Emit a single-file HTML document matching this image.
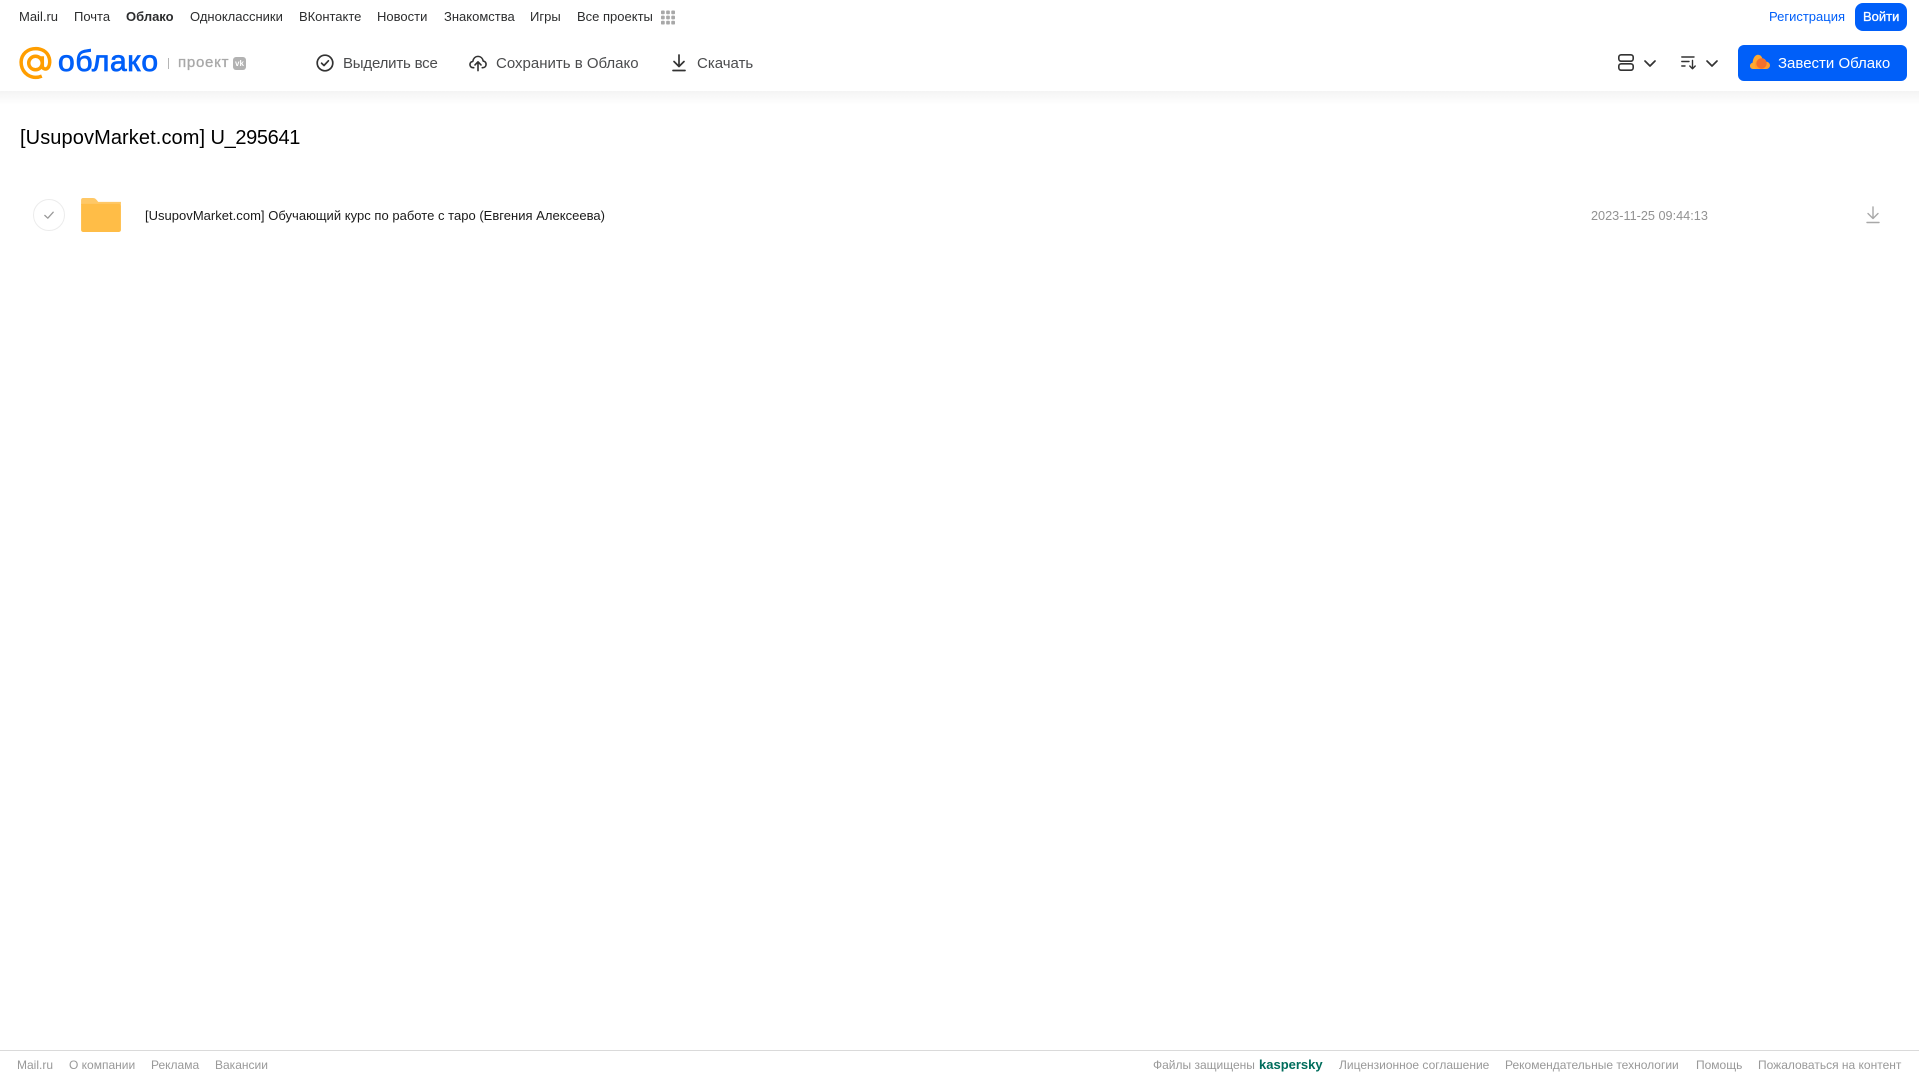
<!DOCTYPE html>
<html lang="ru">
<head>
<meta charset="utf-8">
<title>Облако</title>
<style>
html,body{margin:0;padding:0;background:#fff;}
body{position:relative;width:1919px;height:1079px;overflow:hidden;font-family:"Liberation Sans",Arial,sans-serif;}
.t{position:absolute;white-space:nowrap;line-height:20px;}
.n{font-size:13px;color:#2c2d2e;top:7px;}
.b{font-size:15px;color:#4b4c4e;top:54px;}
.f{font-size:12px;color:#999;top:1055px;}
svg{position:absolute;overflow:visible;}
#shadow{position:absolute;left:0;top:91px;width:1919px;height:14px;background:linear-gradient(#f4f4f4,#fff);}
#rule{position:absolute;left:0;top:1050px;width:1919px;height:1px;background:#dadada;}
</style>
</head>
<body>
<div id="shadow"></div>

<span class="t n" style="left:19px">Mail.ru</span>
<span class="t n" style="left:74px">Почта</span>
<span class="t n" style="left:126px;font-weight:bold">Облако</span>
<span class="t n" style="left:190px">Одноклассники</span>
<span class="t n" style="left:299px;letter-spacing:-.03px">ВКонтакте</span>
<span class="t n" style="left:377px">Новости</span>
<span class="t n" style="left:444px">Знакомства</span>
<span class="t n" style="left:530px">Игры</span>
<span class="t n" style="left:577px">Все проекты</span>
<svg style="left:661px;top:10px" width="14" height="15" viewBox="0 0 15 15" fill="#a8a8a8">
<rect x="0" y="0" width="4" height="4" rx="1"/><rect x="5.5" y="0" width="4" height="4" rx="1"/><rect x="11" y="0" width="4" height="4" rx="1"/>
<rect x="0" y="5.5" width="4" height="4" rx="1"/><rect x="5.5" y="5.5" width="4" height="4" rx="1"/><rect x="11" y="5.5" width="4" height="4" rx="1"/>
<rect x="0" y="11" width="4" height="4" rx="1"/><rect x="5.5" y="11" width="4" height="4" rx="1"/><rect x="11" y="11" width="4" height="4" rx="1"/>
</svg>

<span class="t n" style="left:1769px;color:#005ff9">Регистрация</span>
<div style="position:absolute;left:1855px;top:3px;width:52px;height:28px;border-radius:8px;background:#005ff9"></div>
<span class="t n" style="left:1863px;color:#fff;font-size:13px;-webkit-text-stroke:.3px #fff">Войти</span>

<svg style="left:19px;top:47px" width="33" height="33" viewBox="0 0 34 34" fill="none" stroke="#ff9e00" stroke-width="3.6">
<circle cx="17" cy="16.5" r="7"/>
<path d="M24 9.5V19.5C24 23 28.5 24 30.5 20.5C33 15 31.5 7.5 25.5 3.8C19 0 9.5 1.2 4.8 7.5C0.2 14 1.8 23.5 8.5 28.5C13 31.5 18.5 32 23.5 30"/>
</svg>
<span class="t" style="left:58px;top:44px;font-size:30px;line-height:36px;color:#005ff9;-webkit-text-stroke:.8px #005ff9;letter-spacing:.65px">облако</span>
<div style="position:absolute;left:168px;top:58px;width:1px;height:11px;background:#b5b5b5"></div>
<span class="t" style="left:178px;top:53px;font-size:15px;color:#a8a8a8;-webkit-text-stroke:.3px #a8a8a8;letter-spacing:.75px">проект</span>
<div style="position:absolute;left:233px;top:57px;width:13px;height:13px;border-radius:3px;background:#b2b2b2;color:#fff;font:bold 8px/13px 'Liberation Sans',sans-serif;text-align:center">vk</div>

<svg style="left:316px;top:54px" width="18" height="18" viewBox="0 0 18 18" fill="none" stroke="#333" stroke-width="1.7">
<circle cx="9" cy="9" r="7.8"/><path d="M5.6 9.2L8 11.5L12.4 6.8" stroke-linecap="round" stroke-linejoin="round"/>
</svg>
<span class="t b" style="left:343px;letter-spacing:-.2px">Выделить все</span>

<svg style="left:469px;top:54px" width="18" height="18" viewBox="0 0 19 18" fill="none" stroke="#333" stroke-width="1.7" stroke-linecap="round" stroke-linejoin="round">
<path d="M5 14H4.5C2.3 14 1 12.4 1 10.6C1 8.8 2.4 7.4 4 7.3C4.6 4 6.8 2 9.5 2C12.3 2 14.4 4 15 7C16.8 7.3 18 8.7 18 10.5C18 12.4 16.6 14 14.5 14H14"/>
<path d="M9.5 17V8M6.3 11L9.5 7.8L12.7 11"/>
</svg>
<span class="t b" style="left:496px">Сохранить в Облако</span>

<svg style="left:672px;top:54px" width="14" height="18" viewBox="0 0 14 18" fill="none" stroke="#333" stroke-width="1.7" stroke-linecap="round" stroke-linejoin="round">
<path d="M7 1V12M2 7.5L7 12.5L12 7.5"/><path d="M1 16.5H13"/>
</svg>
<span class="t b" style="left:697px">Скачать</span>

<svg style="left:1618px;top:54px" width="16" height="17" viewBox="0 0 16 17" fill="none" stroke="#333" stroke-width="1.6">
<rect x=".8" y=".8" width="14.4" height="6.4" rx="2.4"/><rect x=".8" y="9.8" width="14.4" height="6.4" rx="2.4"/>
</svg>
<svg style="left:1644px;top:60px" width="12" height="7" viewBox="0 0 12 7" fill="none" stroke="#333" stroke-width="1.7" stroke-linecap="round" stroke-linejoin="round"><path d="M1 1L6 6L11 1"/></svg>
<svg style="left:1681px;top:56px" width="16" height="14" viewBox="0 0 16 14" fill="none" stroke="#333" stroke-width="1.4" stroke-linecap="round" stroke-linejoin="round">
<path d="M.8 1H13M.8 5.5H8M.8 10H4M11.5 4.5V12.5M8.8 10L11.5 12.8L14.2 10"/>
</svg>
<svg style="left:1706px;top:60px" width="12" height="7" viewBox="0 0 12 7" fill="none" stroke="#333" stroke-width="1.7" stroke-linecap="round" stroke-linejoin="round"><path d="M1 1L6 6L11 1"/></svg>

<div style="position:absolute;left:1738px;top:45px;width:169px;height:36px;border-radius:6px;background:#005ff9"></div>
<svg style="left:1750px;top:54px" width="20" height="16" viewBox="0 0 20 16">
<path d="M3 15C1 15 0 13.4 0 12C0 10.2 1.2 9 2.6 8.8C3 4 5.2 .8 8 .8C10.4 .8 11.8 2.6 12.4 4.6L12 15Z" fill="#ffa930"/>
<path d="M7 15C5.2 14 4.4 12 4.8 10C5.4 7 8.4 4.2 11.6 4.2C14.4 4.2 15.8 6 16.2 7.6C18.4 7.8 20 9.4 20 11.4C20 13.4 18.4 15 16.4 15Z" fill="#ff9e2c"/>
<circle cx="11.5" cy="9.5" r="5.2" fill="#f4702c"/>
</svg>
<span class="t" style="left:1778px;top:54px;font-size:15px;color:#fff">Завести Облако</span>

<span class="t" style="left:20px;top:124px;font-size:20px;line-height:28px;color:#000;letter-spacing:.1px">[UsupovMarket.com]</span>
<span class="t" style="left:210.5px;top:124px;font-size:20px;line-height:28px;color:#000;letter-spacing:-.35px">U_295641</span>

<svg style="left:33px;top:199px" width="32" height="32" viewBox="0 0 32 32" fill="none">
<circle cx="16" cy="16" r="15.5" stroke="#ececec"/>
<path d="M11.8 16.4L14.8 19.2L20.2 13.2" stroke="#999" stroke-width="1.3" stroke-linecap="round" stroke-linejoin="round"/>
</svg>
<svg style="left:81px;top:198px" width="40" height="34" viewBox="0 0 41 35">
<path d="M2 0H12C14 0 15 .8 16.2 2.2L17.6 4H41V7H0V2C0 .8 .8 0 2 0Z" fill="#ffc866"/>
<path d="M0 6H39C40.2 6 41 6.8 41 8V33C41 34.2 40.2 35 39 35H2C.8 35 0 34.2 0 33Z" fill="#ffbd47"/>
</svg>
<span class="t" style="left:145px;top:206px;font-size:13px;color:#1a1a1a;letter-spacing:.02px">[UsupovMarket.com] Обучающий курс по работе с таро (Евгения Алексеева)</span>
<span class="t" style="left:1591px;top:206px;font-size:12.7px;color:#929292">2023-11-25 09:44:13</span>
<svg style="left:1866px;top:206px" width="14" height="18" viewBox="0 0 14 18" fill="none" stroke="#a8a8a8" stroke-width="1.4" stroke-linecap="round" stroke-linejoin="round">
<path d="M7 1V12M2 7.5L7 12.5L12 7.5"/><path d="M1 16.5H13"/>
</svg>

<div id="rule"></div>
<span class="t f" style="left:17px">Mail.ru</span>
<span class="t f" style="left:69px">О компании</span>
<span class="t f" style="left:151px">Реклама</span>
<span class="t f" style="left:215px">Вакансии</span>
<span class="t f" style="left:1153px">Файлы защищены</span>
<span class="t" style="left:1259px;top:1055px;font-size:13px;font-weight:bold;color:#006d5c">kaspersky</span>
<span class="t f" style="left:1339px">Лицензионное соглашение</span>
<span class="t f" style="left:1505px">Рекомендательные технологии</span>
<span class="t f" style="left:1696px">Помощь</span>
<span class="t f" style="left:1758px">Пожаловаться на контент</span>
</body>
</html>
